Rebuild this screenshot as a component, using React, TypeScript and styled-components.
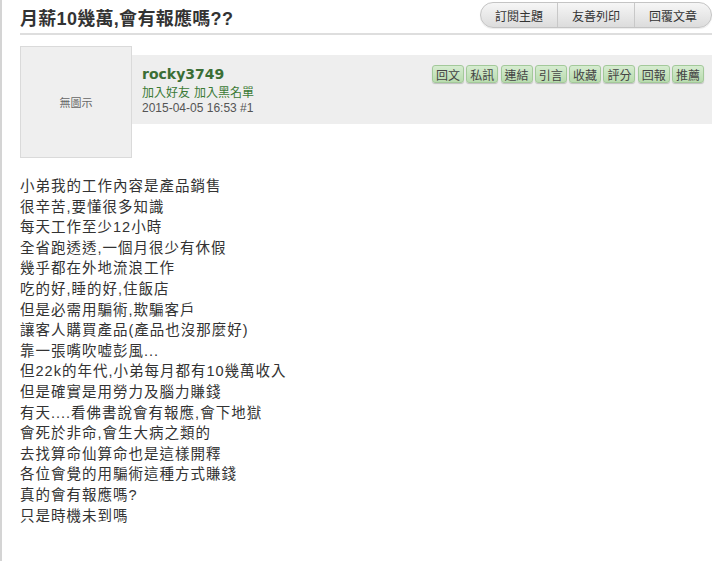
import React from 'react';
import styled, { createGlobalStyle } from 'styled-components';

const GlobalStyle = createGlobalStyle`
  html, body {
    margin: 0;
    padding: 0;
    background: #fff;
  }
  body {
    font-family: "Liberation Sans", "Noto Sans CJK TC", sans-serif;
    color: #333;
  }
`

const Page = styled.div`
  min-height: 561px;
  border-left: 2px solid #d4d4d4;
  padding: 0 8px 0 18px;
  box-sizing: border-box;
`
const Header = styled.div`
  display: flex;
  align-items: center;
  justify-content: space-between;
  height: 33px;
  border-bottom: 2px solid #dedede;
`
const Title = styled.h1`
  margin: 0;
  font-size: 18px;
  font-weight: bold;
  color: #333;
  letter-spacing: 0.3px;
`
const ButtonGroup = styled.div`
  display: flex;
  height: 24px;
  margin-top: -3px;
  border: 1px solid #c4c4c4;
  border-radius: 13px;
  overflow: hidden;
  background: linear-gradient(#f6f6f6, #dcdcdc);
  box-shadow: 0 1px 1px rgba(0,0,0,0.08);
`
const GroupButton = styled.a<{ $first?: boolean }>`
  display: flex;
  align-items: center;
  justify-content: center;
  width: 76px;
  font-size: 12px;
  color: #333;
  border-left: ${p => (p.$first ? 'none' : '1px solid #c8c8c8')};
  cursor: pointer;
`
const PostHead = styled.div`
  display: flex;
  align-items: flex-start;
  margin-top: 11px;
`
const Avatar = styled.div`
  width: 110px;
  height: 110px;
  flex-shrink: 0;
  border: 1px solid #dadada;
  background: #efefef;
  display: flex;
  align-items: center;
  justify-content: center;
  font-size: 11px;
  color: #666;
`
const InfoPanel = styled.div`
  flex: 1;
  margin-top: 9px;
  height: 69px;
  background: #eeeeee;
  display: flex;
  justify-content: space-between;
  padding: 10px 8px 0 10px;
  box-sizing: border-box;
`
const UserBlock = styled.div`
  display: flex;
  flex-direction: column;
`
const UserName = styled.div`
  font-family: "DejaVu Sans", "Liberation Sans", sans-serif;
  font-size: 14px;
  font-weight: bold;
  color: #3b6e35;
  line-height: 18px;
`
const Links = styled.div`
  margin-top: 3px;
  font-size: 12px;
  line-height: 15px;
  color: #3b7a35;
  display: flex;
  gap: 4px;
`
const DateLine = styled.div`
  font-size: 12px;
  line-height: 15px;
  color: #555;
`
const Actions = styled.div`
  display: flex;
  gap: 2.3px;
  margin-left: -2px;
`
const ActionButton = styled.a`
  display: flex;
  align-items: center;
  justify-content: center;
  width: 30px;
  height: 16px;
  font-size: 12px;
  color: #444;
  border: 1px solid #a3c99a;
  border-radius: 3px;
  background: linear-gradient(#d6ecd0, #b8dbae);
  box-shadow: 0 1px 1px rgba(0,0,0,0.2);
  cursor: pointer;
`
const Body = styled.div`
  margin-top: 18px;
  font-size: 14.5px;
  line-height: 20.6px;
  color: #333;
  letter-spacing: 1px;
`

const actions = ['回文', '私訊', '連結', '引言', '收藏', '評分', '回報', '推薦'];

const lines = [
  '小弟我的工作內容是產品銷售',
  '很辛苦,要懂很多知識',
  '每天工作至少12小時',
  '全省跑透透,一個月很少有休假',
  '幾乎都在外地流浪工作',
  '吃的好,睡的好,住飯店',
  '但是必需用騙術,欺騙客戶',
  '讓客人購買產品(產品也沒那麼好)',
  '靠一張嘴吹嘘彭風...',
  '但22k的年代,小弟每月都有10幾萬收入',
  '但是確實是用勞力及腦力賺錢',
  '有天....看佛書說會有報應,會下地獄',
  '會死於非命,會生大病之類的',
  '去找算命仙算命也是這樣開釋',
  '各位會覺的用騙術這種方式賺錢',
  '真的會有報應嗎?',
  '只是時機未到嗎',
];

const App = () => {
  return (
    <Page>
      <GlobalStyle />
      <Header>
        <Title>月薪10幾萬,會有報應嗎??</Title>
        <ButtonGroup>
          <GroupButton $first>訂閱主題</GroupButton>
          <GroupButton>友善列印</GroupButton>
          <GroupButton>回覆文章</GroupButton>
        </ButtonGroup>
      </Header>

      <PostHead>
        <Avatar>無圖示</Avatar>
        <InfoPanel>
          <UserBlock>
            <UserName>rocky3749</UserName>
            <Links>
              <span>加入好友</span>
              <span>加入黑名單</span>
            </Links>
            <DateLine>2015-04-05 16:53 #1</DateLine>
          </UserBlock>
          <Actions>
            {actions.map(a => (
              <ActionButton key={a}>{a}</ActionButton>
            ))}
          </Actions>
        </InfoPanel>
      </PostHead>

      <Body>
        {lines.map((l, i) => (
          <div key={i}>{l}</div>
        ))}
      </Body>
    </Page>
  );
};

export default App;
